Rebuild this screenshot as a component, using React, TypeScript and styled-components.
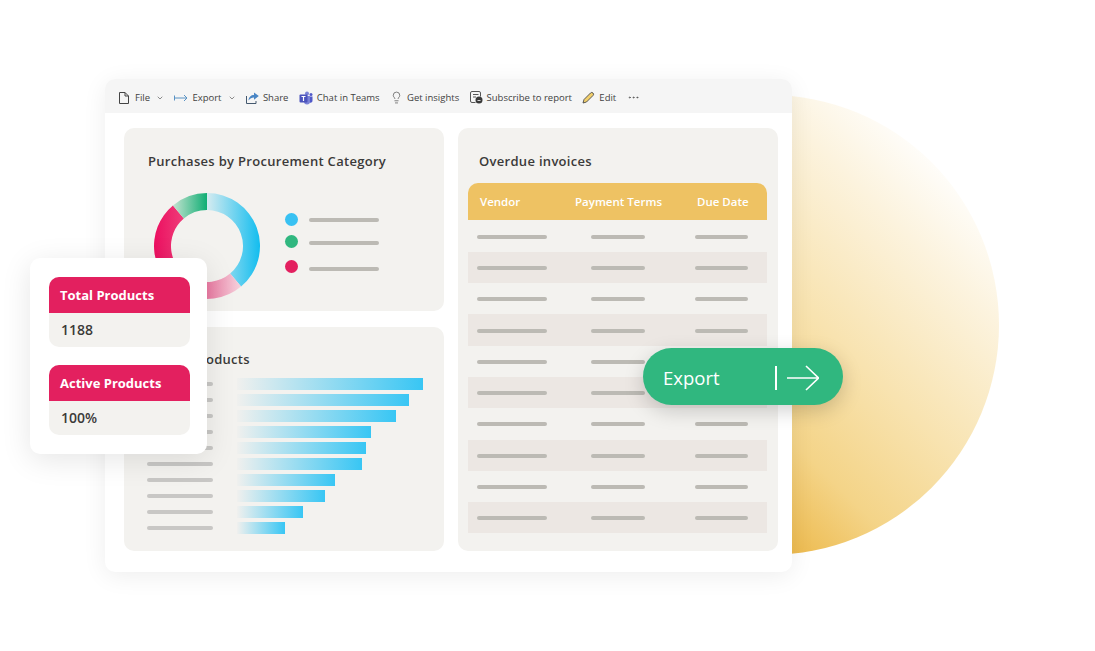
import React from "react";
import styled, {createGlobalStyle} from "styled-components";
import {ChevronDown, Lightbulb, MoreHorizontal} from "lucide-react";

const GlobalStyle = createGlobalStyle`
  html, body {
    margin: 0;
    padding: 0;
    background: #fff;
    overflow: hidden;
  }
  body {
    font-family: "Open Sans", "Noto Sans", "Liberation Sans", sans-serif;
    color: #3b3a39;
  }
`

const Stage = styled.div`
  position: relative;
  width: 1095px;
  height: 651px;
  padding: 79px 0 0 105px;
  box-sizing: border-box;
  overflow: hidden;
`
const Sun = styled.div`
  position: absolute;
  left: 539px;
  top: 95px;
  width: 460px;
  height: 460px;
  border-radius: 50%;
  background: linear-gradient(45deg, #edbb50 28%, #f4d488 40%, #f8e3b0 56%, #fcf3de 75%, #ffffff 88%);
`
const Window = styled.div`
  position: relative;
  width: 687px;
  height: 493px;
  background: #fff;
  border-radius: 10px;
  box-shadow: 0 4px 24px rgba(0, 0, 0, 0.07);
  overflow: hidden;
`
const Toolbar = styled.div`
  display: flex;
  align-items: center;
  gap: 10.4px;
  height: 34px;
  padding: 3px 0 0 12px;
  box-sizing: border-box;
  background: #f5f5f5;
`
const ToolItem = styled.div`
  display: flex;
  align-items: center;
  gap: 4px;
  font-size: 9.5px;
  color: #424242;
  white-space: nowrap;
  svg {
    flex: none;
  }
`
const Caret = styled(ChevronDown)`
  margin-left: 2px;
  color: #555;
`
const Board = styled.div`
  display: grid;
  grid-template-columns: 320px 320px;
  grid-template-rows: 183px 224px;
  gap: 16px 14px;
  padding: 15px 0 0 19px;
`
const Panel = styled.section`
  background: #f3f2ef;
  border-radius: 10px;
  min-height: 0;
`
const TallPanel = styled(Panel)`
  grid-column: 2;
  grid-row: 1 / 3;
  padding: 25px 11px 0 10px;
`
const PanelTitle = styled.h2`
  margin: 0;
  font-size: 13px;
  line-height: 17px;
  font-weight: 600;
  letter-spacing: 0.3px;
  color: #3b3a39;
  white-space: nowrap;
`
const InvoiceTitle = styled(PanelTitle)`
  padding-left: 11px;
`
const DonutPanel = styled(Panel)`
  padding: 25px 0 0 24px;
`
const DonutRow = styled.div`
  display: flex;
  align-items: flex-start;
  margin: 16px 0 0 -1px;
`
const DonutChart = styled.svg`
  flex: none;
`
const Legend = styled.div`
  display: flex;
  flex-direction: column;
  gap: 9.4px;
  margin: 27px 0 0 18px;
`
const LegendRow = styled.div<{$extra?: number}>`
  display: flex;
  align-items: center;
  gap: 11px;
  height: 13px;
  margin-top: ${p => p.$extra || 0}px;
`
const Dot = styled.span<{$color: string}>`
  width: 13px;
  height: 13px;
  border-radius: 50%;
  background: ${p => p.$color};
`
const Line = styled.span<{$w: number; $color?: string; $drop?: number}>`
  display: block;
  width: ${p => p.$w}px;
  height: 4px;
  border-radius: 2px;
  background: ${p => p.$color || "#bcbab4"};
  margin-top: ${p => p.$drop || 0}px;
`
const BarsPanel = styled(Panel)`
  padding: 24px 0 0 23px;
`
const BarsTitle = styled(PanelTitle)`
  padding-left: 1px;
`
const BarList = styled.div`
  display: flex;
  flex-direction: column;
  gap: 4px;
  margin-top: 10px;
`
const BarRow = styled.div`
  display: flex;
  align-items: center;
  gap: 24px;
  height: 12px;
`
const Bar = styled.div`
  height: 12px;
  background: linear-gradient(90deg, #f0f0ee 0%, #38c6f4 100%);
`
const Table = styled.div`
  margin: 13px 0 0;
`
const HeadRow = styled.div`
  display: grid;
  grid-template-columns: 95px 126px 78px;
  align-items: center;
  height: 37px;
  margin-bottom: 0.5px;
  background: #eec263;
  border-radius: 10px 10px 0 0;
  font-size: 11.5px;
  font-weight: 600;
  color: #fff;
  white-space: nowrap;
`
const HeadCell = styled.div<{$pad: number}>`
  padding-left: ${p => p.$pad}px;
`
const Row = styled.div<{$alt: boolean}>`
  display: grid;
  grid-template-columns: 114px 104px 81px;
  align-items: center;
  height: 31.3px;
  box-sizing: border-box;
  padding: 1px 0 0 9px;
  background: ${p => (p.$alt ? "#ece7e3" : "transparent")};
`
const StatCard = styled.div`
  position: absolute;
  left: 30px;
  top: 258px;
  width: 177px;
  height: 196px;
  padding: 19px 17px 0 19px;
  box-sizing: border-box;
  display: flex;
  flex-direction: column;
  gap: 18px;
  background: #fff;
  border-radius: 10px;
  box-shadow: 0 6px 30px rgba(0, 0, 0, 0.1);
`
const Stat = styled.div`
  border-radius: 10px;
  overflow: hidden;
  background: #f3f2ef;
`
const StatHead = styled.div`
  height: 36px;
  line-height: 36px;
  padding-left: 11px;
  background: #e3205f;
  color: #fff;
  font-size: 13px;
  font-weight: 700;
  white-space: nowrap;
`
const StatValue = styled.div`
  height: 34px;
  line-height: 34px;
  padding-left: 12px;
  font-size: 14px;
  font-weight: 600;
  color: #3b3a39;
`
const ExportButton = styled.div`
  position: absolute;
  left: 643px;
  top: 348px;
  width: 200px;
  height: 57px;
  padding: 2px 24px 0 20px;
  box-sizing: border-box;
  display: flex;
  align-items: center;
  justify-content: space-between;
  border-radius: 29px;
  background: #30b77f;
  color: #fff;
  font-size: 18.5px;
  box-shadow: 0 6px 20px rgba(0, 0, 0, 0.18);
`

const barWidths = [186, 172, 159, 133.5, 128.5, 125, 97.5, 87.5, 65.5, 47.5]
const rows = Array.from({length: 10}, (_, i) => i)

function polar(r: number, deg: number) {
    const a = (deg - 90) * Math.PI / 180
    return `${(60 + r * Math.cos(a)).toFixed(2)} ${(60 + r * Math.sin(a)).toFixed(2)}`
}

function arc(from: number, to: number) {
    const large = to - from > 180 ? 1 : 0
    return `M${polar(53, from)} A53 53 0 ${large} 1 ${polar(53, to)} L${polar(36, to)} A36 36 0 ${large} 0 ${polar(36, from)} Z`
}

function Donut() {
    return (
        <DonutChart width="120" height="120" viewBox="0 0 120 120">
            <defs>
                <linearGradient id="blue" x1="0" x2="1" y1="0" y2="0">
                    <stop offset="0" stopColor="#d5ebf0"/>
                    <stop offset="1" stopColor="#12bdef"/>
                </linearGradient>
                <linearGradient id="pink" x1="0" x2="1" y1="0" y2="0">
                    <stop offset="0" stopColor="#e3407c"/>
                    <stop offset="1" stopColor="#f5d3dd"/>
                </linearGradient>
                <linearGradient id="crimson" x1="0" x2="1" y1="0" y2="0">
                    <stop offset="0" stopColor="#ec0f60"/>
                    <stop offset="1" stopColor="#ef4a80"/>
                </linearGradient>
                <linearGradient id="green" x1="0" x2="1" y1="0" y2="0">
                    <stop offset="0" stopColor="#c4e3d0"/>
                    <stop offset="1" stopColor="#0fae74"/>
                </linearGradient>
            </defs>
            <path d={arc(0, 140)} fill="url(#blue)"/>
            <path d={arc(140, 205)} fill="url(#pink)"/>
            <path d={arc(205, 320)} fill="url(#crimson)"/>
            <path d={arc(320, 360)} fill="url(#green)"/>
        </DonutChart>
    )
}

function FileIcon() {
    return (
        <svg width="14" height="14" viewBox="0 0 14 14" fill="none" stroke="#444" strokeWidth="1">
            <path d="M2.500 1.500h5.500l3.500 3.500v7.500h-9zM8 1.500V5h3.500"/>
        </svg>
    )
}

function ExportIcon() {
    return (
        <svg width="14" height="12" viewBox="0 0 14 12" fill="none" stroke="#5a93c4" strokeWidth="1">
            <path d="M.5 3.500v5M.5 6H13M10 3l3 3-3 3"/>
        </svg>
    )
}

function ShareIcon() {
    return (
        <svg width="13" height="13" viewBox="0 0 13 13" fill="none">
            <path d="M.5 5v7.500h9.500V10" stroke="#44586e"/>
            <path d="M2.500 9.500c.3-3.500 2.500-5.500 5.500-5.500V1.500L12.800 5 8 8.800V6.500c-2.300 0-4 1-5.500 3z" fill="#4a86c5"/>
        </svg>
    )
}

function TeamsIcon() {
    return (
        <svg width="14" height="14" viewBox="0 0 14 14">
            <circle cx="8" cy="2.500" r="2" fill="#7b83d6"/>
            <circle cx="12" cy="3.500" r="1.500" fill="#5059c9"/>
            <path d="M9 5.500h4.500v4a2 2 0 0 1-4 .5z" fill="#5059c9"/>
            <path d="M5 5h6v5.500a3 3 0 0 1-6 0z" fill="#7b83d6"/>
            <rect x="0.500" y="3.500" width="8" height="8" rx="1" fill="#4b53bc"/>
            <path d="M2.500 5.500h4M4.500 5.500v4.500" stroke="#fff" strokeWidth="1.200"/>
        </svg>
    )
}

function SubscribeIcon() {
    return (
        <svg width="13" height="13" viewBox="0 0 13 13" fill="none">
            <path d="M5.500 11.500H2a1.500 1.500 0 0 1-1.500-1.500V2A1.500 1.500 0 0 1 2 .5h7A1.500 1.500 0 0 1 10.500 2v3.500" stroke="#555"/>
            <path d="M3 3.500h5.500M3 6h3" stroke="#555"/>
            <circle cx="9" cy="9" r="3.500" fill="#3a3a3a"/>
            <path d="M7.500 9.500h3" stroke="#fff" strokeWidth="0.800"/>
        </svg>
    )
}

function PencilIcon() {
    return (
        <svg width="13" height="13" viewBox="0 0 13 13" fill="none">
            <path d="M1 12l1-3.500 6.500-6.500a1.500 1.500 0 0 1 2.500 2.500L4.500 11z" fill="#f2cf6b" stroke="#4a4a4a" strokeWidth="0.900"/>
        </svg>
    )
}

function ArrowIcon() {
    return (
        <svg width="44" height="28" viewBox="0 0 44 28" fill="none" stroke="#fff" strokeWidth="1.600">
            <path d="M1 2v24" strokeWidth="2"/>
            <path d="M12 14h31M31 2l12.500 12L31 26"/>
        </svg>
    )
}

export default function App(){
    return (
        <Stage>
            <GlobalStyle/>
            <Sun/>
            <Window>
                <Toolbar>
                    <ToolItem><FileIcon/>File<Caret size={8}/></ToolItem>
                    <ToolItem><ExportIcon/>Export<Caret size={8}/></ToolItem>
                    <ToolItem><ShareIcon/>Share</ToolItem>
                    <ToolItem><TeamsIcon/>Chat in Teams</ToolItem>
                    <ToolItem><Lightbulb size={13} strokeWidth={1.2}/>Get insights</ToolItem>
                    <ToolItem><SubscribeIcon/>Subscribe to report</ToolItem>
                    <ToolItem><PencilIcon/>Edit</ToolItem>
                    <ToolItem><MoreHorizontal size={13} strokeWidth={1.2}/></ToolItem>
                </Toolbar>
                <Board>
                    <DonutPanel>
                        <PanelTitle>Purchases by Procurement Category</PanelTitle>
                        <DonutRow>
                            <Donut/>
                            <Legend>
                                <LegendRow><Dot $color="#38c1f2"/><Line $w={70}/></LegendRow>
                                <LegendRow><Dot $color="#30b77f"/><Line $w={70} $drop={2}/></LegendRow>
                                <LegendRow $extra={2}><Dot $color="#e3205f"/><Line $w={70} $drop={6}/></LegendRow>
                            </Legend>
                        </DonutRow>
                    </DonutPanel>
                    <TallPanel>
                        <InvoiceTitle>Overdue invoices</InvoiceTitle>
                        <Table>
                            <HeadRow>
                                <HeadCell $pad={12}>Vendor</HeadCell>
                                <HeadCell $pad={12}>Payment Terms</HeadCell>
                                <HeadCell $pad={8}>Due Date</HeadCell>
                            </HeadRow>
                            {rows.map(i => (
                                <Row key={i} $alt={i % 2 === 1}>
                                    <Line $w={70}/>
                                    <Line $w={54}/>
                                    <Line $w={53}/>
                                </Row>
                            ))}
                        </Table>
                    </TallPanel>
                    <BarsPanel>
                        <BarsTitle>Active Products</BarsTitle>
                        <BarList>
                            {barWidths.map(w => (
                                <BarRow key={w}>
                                    <Line $w={66} $color="#c8c7c5"/>
                                    <Bar style={{width: w}}/>
                                </BarRow>
                            ))}
                        </BarList>
                    </BarsPanel>
                </Board>
            </Window>
            <StatCard>
                <Stat>
                    <StatHead>Total Products</StatHead>
                    <StatValue>1188</StatValue>
                </Stat>
                <Stat>
                    <StatHead>Active Products</StatHead>
                    <StatValue>100%</StatValue>
                </Stat>
            </StatCard>
            <ExportButton>
                Export
                <ArrowIcon/>
            </ExportButton>
        </Stage>
    );
}
